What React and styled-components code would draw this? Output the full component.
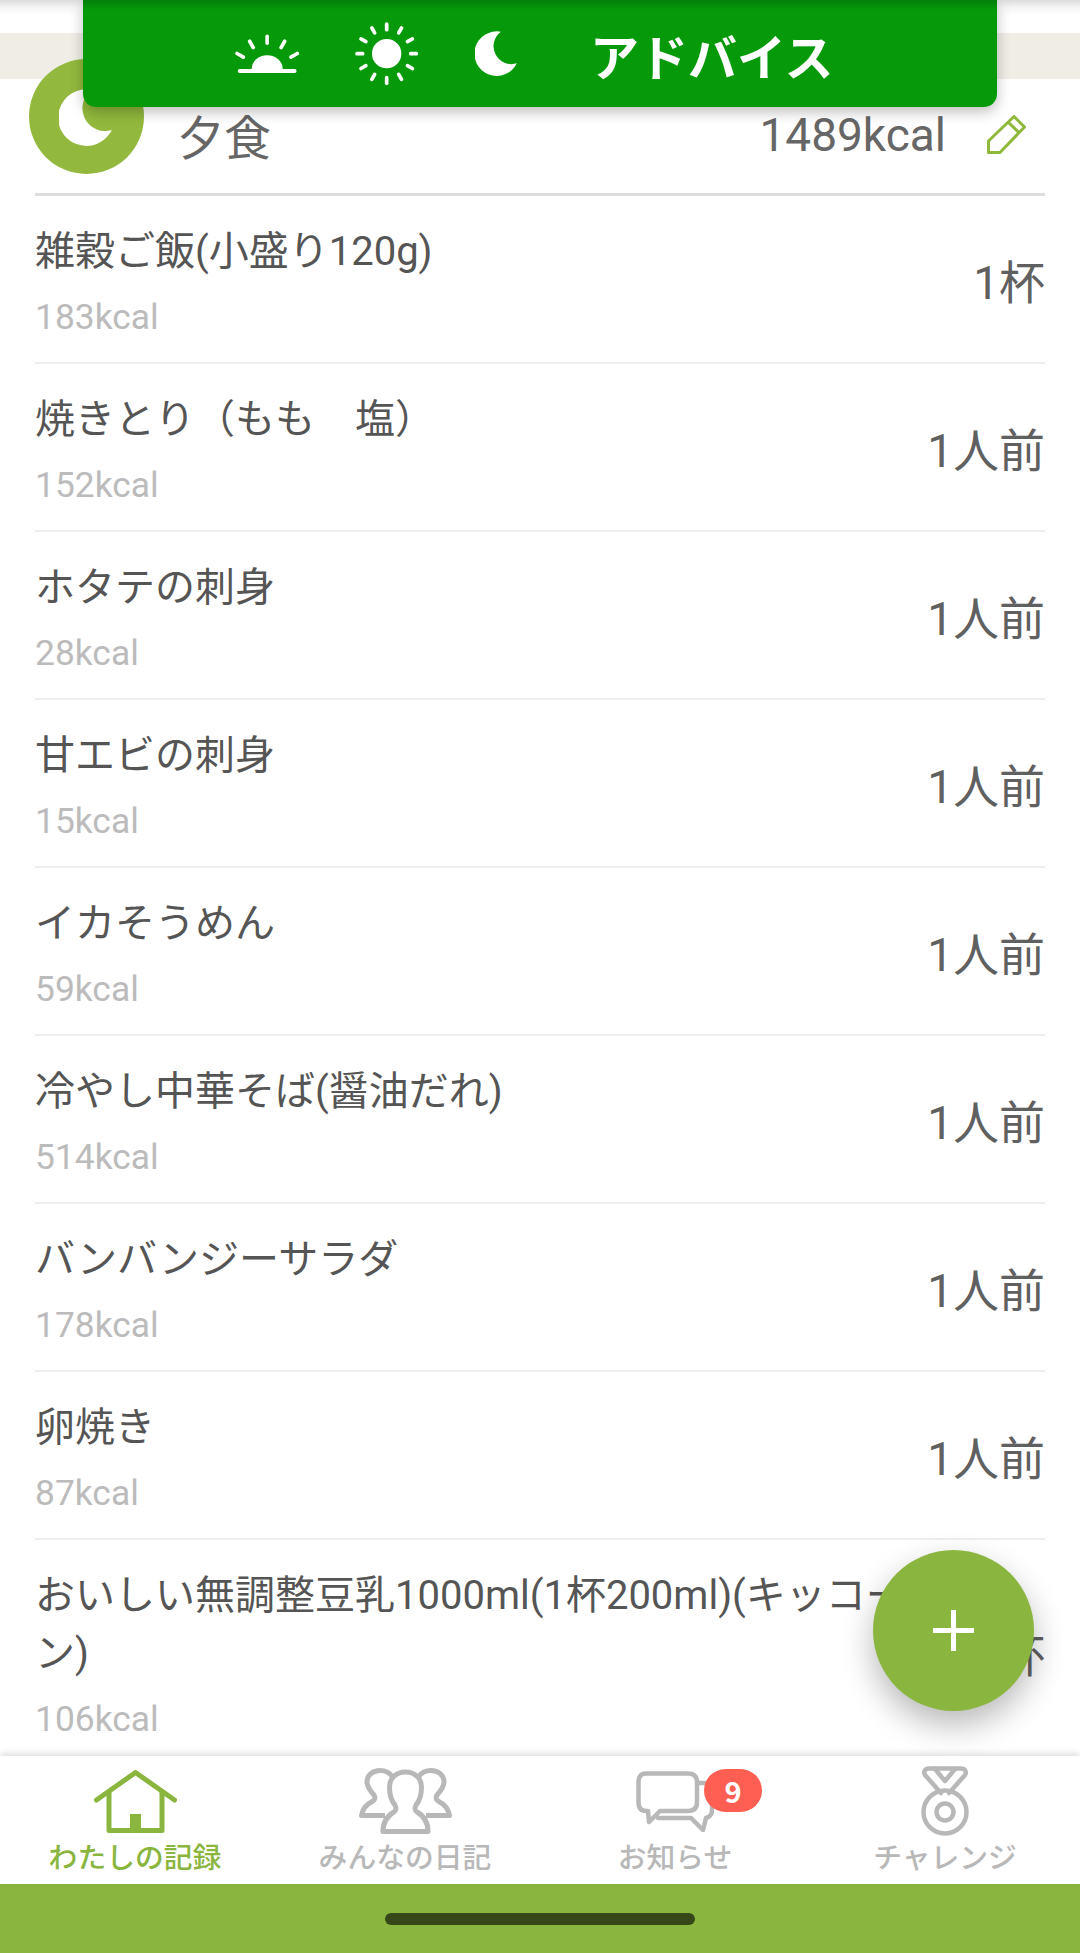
import React from 'react';
import styled, { createGlobalStyle } from 'styled-components';

const Global = createGlobalStyle`
  html, body { margin: 0; padding: 0; background: #fff; }
  * { box-sizing: border-box; }
`;

const FONT = `Roboto, "Noto Sans CJK JP", sans-serif`;
const GREEN = '#8ab63f';

const Screen = styled.div`
  position: relative;
  width: 1080px;
  height: 1953px;
  display: flex;
  flex-direction: column;
  overflow: hidden;
  background: #fff;
  font-family: ${FONT};
`;
const TopStrip = styled.div`
  flex: none;
  height: 33px;
  background: linear-gradient(#dcdcdc 0, #f6f6f6 8px, #fff 16px);
`;
const Band = styled.div`
  flex: none;
  height: 46px;
  background: #efede6;
`;
const Panel = styled.div`
  position: absolute;
  z-index: 5;
  top: 0;
  left: 83px;
  width: 914px;
  height: 107px;
  display: flex;
  align-items: center;
  padding-left: 150px;
  border-radius: 0 0 13px 13px;
  background: linear-gradient(#057f08 0, #069a0a 10px);
  box-shadow: 0 5px 14px rgba(0, 0, 0, 0.25);
`;
const AdviceIcon = styled.svg`
  flex: none;
  margin-right: ${p => p.$gap}px;
`;
const AdviceText = styled.span`
  color: #fff;
  font-family: "Noto Sans CJK JP", sans-serif;
  font-weight: 700;
  font-size: 49px;
  line-height: 60px;
  margin-top: 3px;
`;
const Header = styled.header`
  flex: none;
  height: 117px;
  margin: 0 35px;
  display: flex;
  align-items: flex-start;
  border-bottom: 3px solid #ddd;
`;
const Avatar = styled.div`
  flex: none;
  width: 115px;
  height: 115px;
  margin: -20px 0 0 -6px;
  border-radius: 50%;
  background: #92b93d;
  display: flex;
  padding: 30px 0 0 30px;
`;
const MealTitle = styled.h2`
  margin: 33px 0 0 33px;
  flex: 1;
  font-size: 47px;
  font-weight: 400;
  line-height: 54px;
  color: #666;
`;
const MealTotal = styled.span`
  margin-top: 29px;
  font-size: 46px;
  line-height: 54px;
  color: #666;
`;
const EditIcon = styled.svg`
  flex: none;
  margin: 36px 19px 0 41px;
`;
const List = styled.ul`
  flex: 1;
  min-height: 0;
  margin: 0;
  padding: 0 35px;
  list-style: none;
  overflow: hidden;
`;
const Row = styled.li`
  display: flex;
  align-items: center;
  padding: 27px 0 15px;
  border-bottom: 2px solid #eee;
`;
const RowMain = styled.div`
  flex: 1;
  min-width: 0;
  padding-right: 20px;
`;
const FoodName = styled.div`
  font-size: 40px;
  line-height: 58px;
  color: #555;
`;
const FoodKcal = styled.div`
  margin-top: 6px;
  font-size: 35.4px;
  line-height: 60px;
  color: #bbb;
`;
const Amount = styled.div`
  flex: none;
  padding-bottom: 5px;
  font-size: 46px;
  line-height: 60px;
  color: #606060;
`;
const Fab = styled.button`
  position: absolute;
  z-index: 4;
  left: 873px;
  top: 1550px;
  width: 161px;
  height: 161px;
  padding: 0;
  border: 0;
  border-radius: 50%;
  background: ${GREEN};
  box-shadow: 0 14px 32px rgba(0, 0, 0, 0.28);
  display: flex;
  align-items: center;
  justify-content: center;
`;
const Nav = styled.nav`
  position: relative;
  z-index: 3;
  flex: none;
  height: 128px;
  display: grid;
  grid-template-columns: repeat(4, 1fr);
  background: #fff;
  box-shadow: 0 -3px 6px rgba(0, 0, 0, 0.12);
`;
const Tab = styled.div`
  position: relative;
  display: flex;
  flex-direction: column;
  align-items: center;
  padding-top: 10px;
  color: ${p => (p.$active ? GREEN : '#b8b8b8')};
`;
const TabIcon = styled.div`
  height: 70px;
  display: flex;
  align-items: center;
  justify-content: center;
`;
const TabLabel = styled.span`
  margin-top: 2px;
  font-size: 28.8px;
  line-height: 36px;
  font-weight: 500;
  font-family: "Noto Sans CJK JP", sans-serif;
`;
const Badge = styled.span`
  position: absolute;
  left: 164px;
  top: 13px;
  width: 58px;
  height: 43px;
  border-radius: 22px;
  background: #ff5f52;
  color: #fff;
  font-family: "Noto Sans CJK JP", sans-serif;
  font-weight: 700;
  font-size: 29px;
  line-height: 43px;
  text-align: center;
`;
const GestureBar = styled.div`
  flex: none;
  height: 69px;
  background: ${GREEN};
  display: flex;
  justify-content: center;
  padding-top: 29px;
`;
const Handle = styled.div`
  width: 310px;
  height: 12px;
  border-radius: 6px;
  background: #364718;
`;

const foods = [
  ['雑穀ご飯(小盛り120g)', '183kcal', '1杯'],
  ['焼きとり（もも　塩）', '152kcal', '1人前'],
  ['ホタテの刺身', '28kcal', '1人前'],
  ['甘エビの刺身', '15kcal', '1人前'],
  ['イカそうめん', '59kcal', '1人前'],
  ['冷やし中華そば(醤油だれ)', '514kcal', '1人前'],
  ['バンバンジーサラダ', '178kcal', '1人前'],
  ['卵焼き', '87kcal', '1人前'],
  ['おいしい無調整豆乳1000ml(1杯200ml)(キッコーマン)', '106kcal', '1杯'],
];

const Moon = ({ width, height, gap = 0 }) => (
  <AdviceIcon $gap={gap} width={width} height={height} viewBox="0 0 125 135">
    <path d="M77 2 A67 67 0 1 0 125 97 A54 54 0 0 1 77 2 Z" fill="#fff" />
  </AdviceIcon>
);

const Sunrise = () => (
  <AdviceIcon $gap={51} width="68" height="43" viewBox="40 95 205 130" fill="none" stroke="#fff" strokeLinecap="round" strokeWidth="11">
    <path d="M143 108V129M90 123L101 142M196 123L185 142M52 160L71 171M234 160L215 171" />
    <path d="M96 207A47 42 0 0 1 190 207Z" fill="#fff" stroke="none" />
    <path d="M60 213H226" strokeWidth="12" />
  </AdviceIcon>
);

const Sun = () => {
  const rays = [0, 30, 60, 90, 120, 150, 180, 210, 240, 270, 300, 330];
  return (
    <AdviceIcon $gap={53} width="70" height="70" viewBox="400 55 210 210" fill="none" stroke="#fff" strokeLinecap="round" strokeWidth="11">
      <circle cx="504" cy="159" r="44" fill="#fff" stroke="none" />
      {rays.map(a => (
        <line key={a} x1="504" y1="70" x2="504" y2="87" transform={`rotate(${a} 504 159)`} />
      ))}
    </AdviceIcon>
  );
};

const HomeIcon = () => (
  <svg width="83" height="63" viewBox="0 0 83 63" fill="none" stroke="currentColor" strokeWidth="5" strokeLinecap="round" strokeLinejoin="round">
    <path d="M2.5 30L41.5 2.5L80.5 30" />
    <path d="M15 22V60.5H68V22" />
    <rect x="36" y="44" width="11" height="16" fill="currentColor" stroke="none" />
  </svg>
);

const PeopleIcon = () => (
  <svg width="93" height="66" viewBox="0 0 93 66" fill="none" stroke="currentColor" strokeWidth="5" strokeLinejoin="round">
    <path d="M26 47.5H2.5C3.5 41 8 36 14 33C16 32 16.5 29 15 27C10.500 22 8 18 8 14C8 7 14 2.500 21 2.500C27 2.500 31 5 33.500 9" />
    <path d="M67 47.500H90.500C89.500 41 85 36 79 33C77 32 76.500 29 78 27C82.500 22 85 18 85 14C85 7 79 2.500 72 2.500C66 2.500 62 5 59.500 9" />
    <path d="M24 63.500H69C69 54 65 48 58 44C56 43 55.500 40 57 37C60.500 33 62.500 26 62.500 19C62.500 10 55.500 4 46.500 4C37.500 4 30.500 10 30.500 19C30.500 26 32.500 33 36 37C37.500 40 37 43 35 44C28 48 24 54 24 63.500Z" fill="#fff" />
  </svg>
);

const ChatIcon = () => (
  <svg width="78" height="61" viewBox="0 0 78 61" fill="none" stroke="currentColor" strokeWidth="4.5" strokeLinejoin="round" strokeLinecap="round">
    <path d="M62 12H68C73 12 76 15 76 20V40C76 44 73 46 70 47L67 59L55 47H22" />
    <path d="M10 2.500H52C58 2.500 61 5 61 11V31C61 37 58 40 52 40H24L13 51L12 40H10C5 40 2.500 37 2.500 31V11C2.500 5 5 2.500 10 2.500Z" fill="#fff" />
  </svg>
);

const MedalIcon = () => (
  <svg width="48" height="70" viewBox="0 0 48 70" fill="none" stroke="currentColor" strokeWidth="4.500" strokeLinejoin="round" strokeLinecap="round">
    <path d="M8 2.500H40C44 2.500 46 6 44 9L28 27M20 27L4 9C2 6 4 2.500 8 2.500" />
    <path d="M14 3L24 15L34 3" />
    <circle cx="24" cy="46" r="21.500" />
    <circle cx="24" cy="46" r="8.500" />
  </svg>
);

export default function App() {
  return (
    <Screen>
      <Global />
      <TopStrip />
      <Band />
      <Panel>
        <Sunrise />
        <Sun />
        <Moon width={42} height={45} gap={73} />
        <AdviceText>アドバイス</AdviceText>
      </Panel>
      <Header>
        <Avatar>
          <Moon width={53} height={57} />
        </Avatar>
        <MealTitle>夕食</MealTitle>
        <MealTotal>1489kcal</MealTotal>
        <EditIcon width="39" height="39" viewBox="0 0 39 39" fill="none" stroke="#8fb93b" strokeWidth="3" strokeLinejoin="round">
          <path d="M27 1.500L37.500 12L13 37.500H1.500V26Z" />
          <path d="M21 7L32.500 18" />
        </EditIcon>
      </Header>
      <List>
        {foods.map(([name, kcal, amount]) => (
          <Row key={name}>
            <RowMain>
              <FoodName>{name}</FoodName>
              <FoodKcal>{kcal}</FoodKcal>
            </RowMain>
            <Amount>{amount}</Amount>
          </Row>
        ))}
      </List>
      <Fab aria-label="追加">
        <svg width="41" height="41" viewBox="0 0 41 41"><path d="M18 0h5v18h18v5H23v18h-5V23H0v-5h18z" fill="#fff" /></svg>
      </Fab>
      <Nav>
        <Tab $active>
          <TabIcon><HomeIcon /></TabIcon>
          <TabLabel>わたしの記録</TabLabel>
        </Tab>
        <Tab>
          <TabIcon><PeopleIcon /></TabIcon>
          <TabLabel>みんなの日記</TabLabel>
        </Tab>
        <Tab>
          <TabIcon><ChatIcon /></TabIcon>
          <TabLabel>お知らせ</TabLabel>
          <Badge>9</Badge>
        </Tab>
        <Tab>
          <TabIcon><MedalIcon /></TabIcon>
          <TabLabel>チャレンジ</TabLabel>
        </Tab>
      </Nav>
      <GestureBar><Handle /></GestureBar>
    </Screen>
  );
}
